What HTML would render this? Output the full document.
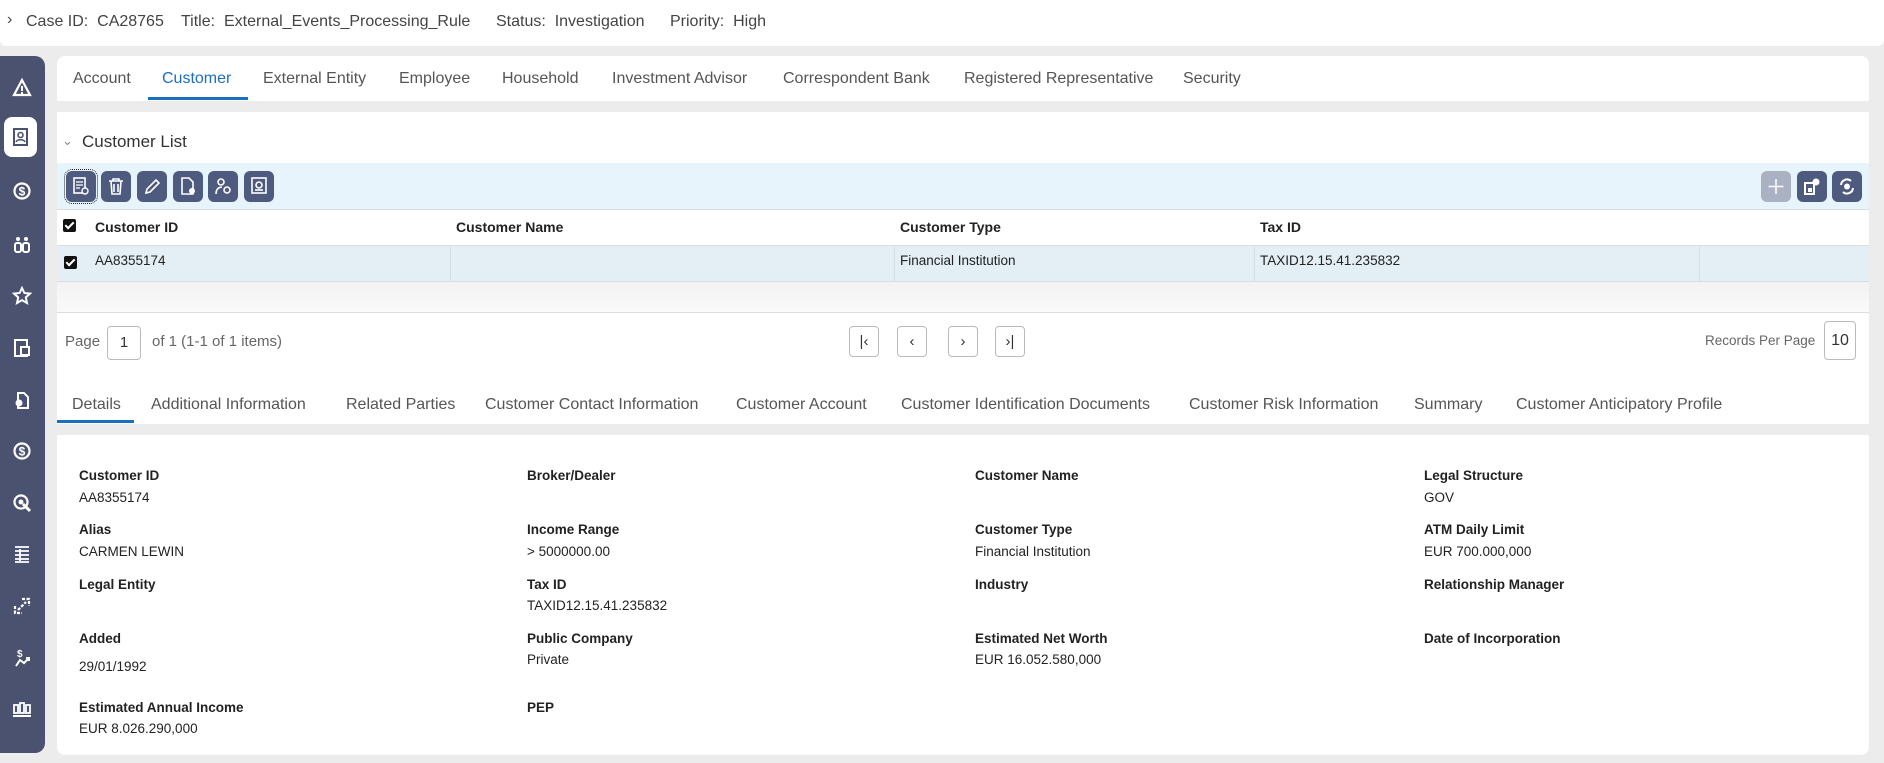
<!DOCTYPE html>
<html><head><meta charset="utf-8"><style>
*{box-sizing:border-box;margin:0;padding:0}
body{width:1884px;height:763px;background:#ececec;font-family:"Liberation Sans",sans-serif;color:#333;position:relative;overflow:hidden}
.abs{position:absolute}
.top{left:0;top:0;width:1884px;height:46px;background:#fff;border-radius:0 0 6px 6px;font-size:16px;color:#444}
.top span{position:absolute;top:13px}
.side{left:0;top:56px;width:45px;height:697px;background:#4b5270;border-radius:0 10px 10px 0}
.act{left:4px;top:117px;width:33px;height:40px;background:#fff;border-radius:8px}
.panel{background:#fff;left:57px;width:1812px}
.tab{position:absolute;font-size:16px;color:#555;top:14px}
.tab.on{color:#1b6fbf}
.btn{position:absolute;top:171px;width:30px;height:31px;background:#4e5a7e;border-radius:6px}
.btn svg{position:absolute;left:6px;top:6px}
.th{position:absolute;top:219px;font-size:14px;font-weight:bold;color:#222}
.td{position:absolute;top:253px;font-size:13.5px;color:#222}
.pg{position:absolute;top:326px;width:30px;height:31px;border:1px solid #bbb;border-radius:4px;background:#fff;font-size:15px;text-align:center;line-height:29px;color:#333}
.lb{position:absolute;font-size:13.5px;font-weight:bold;color:#222}
.vl{position:absolute;font-size:13.5px;color:#222}
.cb{position:absolute;width:13px;height:13px;background:#111;border-radius:2px}
.cb::after{content:"";position:absolute;left:4px;top:1px;width:3px;height:7px;border:solid #fff;border-width:0 2px 2px 0;transform:rotate(45deg)}
</style></head><body>
<div class="abs top">
<span style="left:7px;top:11px">›</span>
<span style="left:26px">Case ID:&nbsp; CA28765</span>
<span style="left:181px">Title:&nbsp; External_Events_Processing_Rule</span>
<span style="left:496px">Status:&nbsp; Investigation</span>
<span style="left:670px">Priority:&nbsp; High</span>
</div>

<div class="abs side"></div>
<div class="abs act"></div>
<svg class="abs" style="left:12px;top:78px" width="20" height="20" viewBox="0 0 20 20"><path d="M10 2L18 17H2Z" fill="none" stroke="#fff" stroke-width="2.2"/><rect x="9" y="8" width="2" height="5" fill="#fff"/><rect x="9" y="14" width="2" height="2" fill="#fff"/></svg>
<svg class="abs" style="left:11px;top:127px" width="20" height="20" viewBox="0 0 20 20"><rect x="3" y="2" width="13" height="16" fill="none" stroke="#4b5270" stroke-width="2"/><circle cx="9.5" cy="8" r="2.5" fill="none" stroke="#4b5270" stroke-width="1.6"/><path d="M5 15c1-3 8-3 9 0" fill="none" stroke="#4b5270" stroke-width="1.6"/></svg>
<svg class="abs" style="left:12px;top:181px" width="20" height="20" viewBox="0 0 20 20"><circle cx="10" cy="10" r="7.5" fill="none" stroke="#fff" stroke-width="2.2"/><text x="10" y="14.5" font-size="12" font-weight="bold" text-anchor="middle" fill="#fff" font-family="Liberation Sans">$</text></svg>
<svg class="abs" style="left:12px;top:235px" width="20" height="20" viewBox="0 0 20 20"><circle cx="6" cy="4" r="2" fill="#fff"/><circle cx="14" cy="4" r="2" fill="#fff"/><rect x="3" y="8" width="6" height="9" rx="2" fill="none" stroke="#fff" stroke-width="2"/><rect x="11" y="8" width="6" height="9" rx="2" fill="none" stroke="#fff" stroke-width="2"/></svg>
<svg class="abs" style="left:12px;top:286px" width="20" height="20" viewBox="0 0 20 20"><path d="M10 2l2.4 5 5.6.6-4.2 3.8 1.2 5.6-5-2.9-5 2.9 1.2-5.6L2 7.6 7.6 7Z" fill="none" stroke="#fff" stroke-width="2"/></svg>
<svg class="abs" style="left:12px;top:338px" width="20" height="20" viewBox="0 0 20 20"><rect x="3" y="2" width="12" height="16" fill="none" stroke="#fff" stroke-width="2"/><rect x="9" y="9" width="8" height="8" fill="#4b5270" stroke="#fff" stroke-width="2"/></svg>
<svg class="abs" style="left:12px;top:390px" width="20" height="20" viewBox="0 0 20 20"><path d="M6 3h6l4 4v11H6Z" fill="none" stroke="#fff" stroke-width="2"/><circle cx="7" cy="13" r="3.5" fill="#fff"/></svg>
<svg class="abs" style="left:12px;top:441px" width="20" height="20" viewBox="0 0 20 20"><circle cx="10" cy="10" r="7.5" fill="none" stroke="#fff" stroke-width="2.2"/><text x="10" y="14.5" font-size="12" font-weight="bold" text-anchor="middle" fill="#fff" font-family="Liberation Sans">$</text></svg>
<svg class="abs" style="left:12px;top:493px" width="20" height="20" viewBox="0 0 20 20"><circle cx="9" cy="9" r="6.5" fill="none" stroke="#fff" stroke-width="2.2"/><circle cx="9" cy="9" r="2.5" fill="#fff"/><path d="M11 11l7 7" stroke="#fff" stroke-width="3"/></svg>
<svg class="abs" style="left:12px;top:544px" width="20" height="20" viewBox="0 0 20 20"><path d="M3 3h14M3 7h14M3 11h14M3 15h14M3 18h14M8 5v12" stroke="#fff" stroke-width="1.8"/></svg>
<svg class="abs" style="left:12px;top:596px" width="20" height="20" viewBox="0 0 20 20"><path d="M3 10v7h7M10 3h7v7M6 14l8-8" fill="none" stroke="#fff" stroke-width="2.2" stroke-dasharray="3 1.5"/></svg>
<svg class="abs" style="left:12px;top:648px" width="20" height="20" viewBox="0 0 20 20"><text x="5" y="9" font-size="10" font-weight="bold" fill="#fff" font-family="Liberation Sans">$</text><path d="M4 18l4-6 4 3 5-5M14 10h3v3" fill="none" stroke="#fff" stroke-width="2"/></svg>
<svg class="abs" style="left:12px;top:699px" width="20" height="20" viewBox="0 0 20 20"><rect x="2" y="6" width="4" height="8" fill="none" stroke="#fff" stroke-width="1.8"/><rect x="8" y="4" width="4" height="10" fill="none" stroke="#fff" stroke-width="1.8"/><rect x="14" y="6" width="4" height="8" fill="none" stroke="#fff" stroke-width="1.8"/><path d="M1 17h18" stroke="#fff" stroke-width="2"/></svg>

<div class="abs panel" style="top:56px;height:45px;border-radius:8px 8px 0 0">
<span class="tab" style="left:16px">Account</span>
<span class="tab on" style="left:105px">Customer</span>
<div class="abs" style="left:91px;top:41px;width:100px;height:3px;background:#1b6fbf"></div>
<span class="tab" style="left:206px">External Entity</span>
<span class="tab" style="left:342px">Employee</span>
<span class="tab" style="left:445px">Household</span>
<span class="tab" style="left:555px">Investment Advisor</span>
<span class="tab" style="left:726px">Correspondent Bank</span>
<span class="tab" style="left:907px">Registered Representative</span>
<span class="tab" style="left:1126px">Security</span>
</div>

<div class="abs panel" style="top:112px;height:312px"></div>
<div class="abs" style="left:62px;top:133px;font-size:13px;color:#888">⌄</div>
<div class="abs" style="left:82px;top:132px;font-size:17px;color:#333">Customer List</div>
<div class="abs" style="left:57px;top:163px;width:1812px;height:46px;background:#e8f4fc"></div>
<div class="btn" style="left:66px;outline:1px dotted #222;outline-offset:1px"><svg width="18" height="19" viewBox="0 0 18 19"><rect x="2" y="1" width="11" height="15" fill="none" stroke="#fff" stroke-width="1.6"/><path d="M4 5h7M4 8h7M4 11h4" stroke="#fff" stroke-width="1.3"/><circle cx="13" cy="14" r="3" fill="#4e5a7e" stroke="#fff" stroke-width="1.4"/></svg></div>
<div class="btn" style="left:101px"><svg width="18" height="19" viewBox="0 0 18 19"><path d="M2 4h14M6 4V2h6v2M4 4l1 13h8l1-13M7 7v8M11 7v8" fill="none" stroke="#fff" stroke-width="1.6"/></svg></div>
<div class="btn" style="left:137px"><svg width="18" height="19" viewBox="0 0 18 19"><path d="M3 16l1-4L13 3l3 3-9 9Z" fill="none" stroke="#fff" stroke-width="1.6"/></svg></div>
<div class="btn" style="left:173px"><svg width="18" height="19" viewBox="0 0 18 19"><path d="M3 1h7l4 4v12H3Z" fill="none" stroke="#fff" stroke-width="1.6"/><circle cx="13" cy="14" r="3" fill="#fff"/></svg></div>
<div class="btn" style="left:208px"><svg width="18" height="19" viewBox="0 0 18 19"><circle cx="7" cy="5" r="3" fill="none" stroke="#fff" stroke-width="1.6"/><path d="M2 17c0-5 3-7 6-7" fill="none" stroke="#fff" stroke-width="1.6"/><circle cx="13" cy="13" r="3" fill="none" stroke="#fff" stroke-width="1.6"/></svg></div>
<div class="btn" style="left:244px"><svg width="18" height="19" viewBox="0 0 18 19"><rect x="2" y="1" width="14" height="15" fill="none" stroke="#fff" stroke-width="1.6"/><circle cx="9" cy="8" r="3" fill="none" stroke="#fff" stroke-width="1.6"/><path d="M5 13h8" stroke="#fff" stroke-width="1.6"/></svg></div>
<div class="btn" style="left:1761px;background:#a9b1c3"><svg width="18" height="19" viewBox="0 0 18 19"><path d="M9 2v15M1.5 9.5h15" stroke="#fff" stroke-width="1.5"/></svg></div>
<div class="btn" style="left:1797px"><svg width="18" height="19" viewBox="0 0 18 19"><rect x="2" y="6" width="9" height="11" fill="none" stroke="#fff" stroke-width="2"/><rect x="5" y="11" width="4" height="4" fill="#fff"/><circle cx="13" cy="5" r="3.5" fill="#fff"/></svg></div>
<div class="btn" style="left:1832px"><svg width="18" height="19" viewBox="0 0 18 19"><path d="M3 8a6 6 0 0 1 10-4M15 11a6 6 0 0 1-10 4" fill="none" stroke="#fff" stroke-width="2"/><circle cx="9" cy="9.5" r="3" fill="#fff"/></svg></div>

<div class="abs" style="left:57px;top:209px;width:1812px;height:1px;background:#ddd"></div>
<div class="cb" style="left:63px;top:219px"></div>
<span class="th" style="left:95px">Customer ID</span>
<span class="th" style="left:456px">Customer Name</span>
<span class="th" style="left:900px">Customer Type</span>
<span class="th" style="left:1260px">Tax ID</span>
<div class="abs" style="left:57px;top:245px;width:1812px;height:37px;background:#e3eff5;border-top:1px solid #ddd;border-bottom:1px solid #ddd"></div>
<div class="abs" style="left:450px;top:246px;width:1px;height:35px;background:#d3dfe5"></div>
<div class="abs" style="left:894px;top:246px;width:1px;height:35px;background:#d3dfe5"></div>
<div class="abs" style="left:1254px;top:246px;width:1px;height:35px;background:#d3dfe5"></div>
<div class="abs" style="left:1699px;top:246px;width:1px;height:35px;background:#d3dfe5"></div>
<div class="cb" style="left:64px;top:256px"></div>
<span class="td" style="left:95px">AA8355174</span>
<span class="td" style="left:900px">Financial Institution</span>
<span class="td" style="left:1260px">TAXID12.15.41.235832</span>
<div class="abs" style="left:57px;top:282px;width:1812px;height:31px;background:linear-gradient(#f2f2f2,#fafafa);border-bottom:1px solid #ddd"></div>

<span class="abs" style="left:65px;top:333px;font-size:15px;color:#666">Page</span>
<div class="pg" style="left:107px;top:326px;width:34px;height:34px;line-height:32px">1</div>
<span class="abs" style="left:152px;top:333px;font-size:15px;color:#666">of 1 (1-1 of 1 items)</span>
<div class="pg" style="left:849px">|‹</div>
<div class="pg" style="left:897px">‹</div>
<div class="pg" style="left:948px">›</div>
<div class="pg" style="left:995px">›|</div>
<span class="abs" style="left:1705px;top:333px;font-size:13.5px;color:#666">Records Per Page</span>
<div class="pg" style="left:1824px;top:321px;width:32px;height:39px;line-height:37px;font-size:16px">10</div>

<span class="tab" style="left:72px;top:396px;position:absolute">Details</span>
<div class="abs" style="left:57px;top:420px;width:77px;height:3px;background:#1b6fbf"></div>
<span class="tab" style="left:151px;top:396px">Additional Information</span>
<span class="tab" style="left:346px;top:396px">Related Parties</span>
<span class="tab" style="left:485px;top:396px">Customer Contact Information</span>
<span class="tab" style="left:736px;top:396px">Customer Account</span>
<span class="tab" style="left:901px;top:396px">Customer Identification Documents</span>
<span class="tab" style="left:1189px;top:396px">Customer Risk Information</span>
<span class="tab" style="left:1414px;top:396px">Summary</span>
<span class="tab" style="left:1516px;top:396px">Customer Anticipatory Profile</span>

<div class="abs panel" style="top:435px;height:320px;border-radius:0 0 8px 8px"></div>
<span class="lb" style="left:79px;top:468px">Customer ID</span><span class="vl" style="left:79px;top:490px">AA8355174</span>
<span class="lb" style="left:527px;top:468px">Broker/Dealer</span>
<span class="lb" style="left:975px;top:468px">Customer Name</span>
<span class="lb" style="left:1424px;top:468px">Legal Structure</span><span class="vl" style="left:1424px;top:490px">GOV</span>
<span class="lb" style="left:79px;top:522px">Alias</span><span class="vl" style="left:79px;top:544px">CARMEN LEWIN</span>
<span class="lb" style="left:527px;top:522px">Income Range</span><span class="vl" style="left:527px;top:544px">&gt; 5000000.00</span>
<span class="lb" style="left:975px;top:522px">Customer Type</span><span class="vl" style="left:975px;top:544px">Financial Institution</span>
<span class="lb" style="left:1424px;top:522px">ATM Daily Limit</span><span class="vl" style="left:1424px;top:544px">EUR 700.000,000</span>
<span class="lb" style="left:79px;top:577px">Legal Entity</span>
<span class="lb" style="left:527px;top:577px">Tax ID</span><span class="vl" style="left:527px;top:598px">TAXID12.15.41.235832</span>
<span class="lb" style="left:975px;top:577px">Industry</span>
<span class="lb" style="left:1424px;top:577px">Relationship Manager</span>
<span class="lb" style="left:79px;top:631px">Added</span><span class="vl" style="left:79px;top:659px">29/01/1992</span>
<span class="lb" style="left:527px;top:631px">Public Company</span><span class="vl" style="left:527px;top:652px">Private</span>
<span class="lb" style="left:975px;top:631px">Estimated Net Worth</span><span class="vl" style="left:975px;top:652px">EUR 16.052.580,000</span>
<span class="lb" style="left:1424px;top:631px">Date of Incorporation</span>
<span class="lb" style="left:79px;top:700px">Estimated Annual Income</span><span class="vl" style="left:79px;top:721px">EUR 8.026.290,000</span>
<span class="lb" style="left:527px;top:700px">PEP</span>
</body></html>
